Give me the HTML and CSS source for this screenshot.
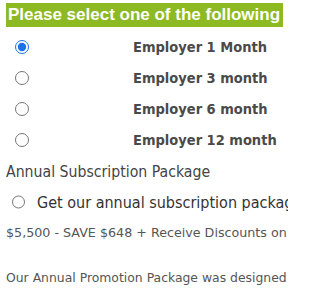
FILE: index.html
```html
<!DOCTYPE html>
<html>
<head>
<meta charset="utf-8">
<link rel="stylesheet" href="styles.css">
</head>
<body>
<div class="page">
  <div class="header">Please select one of the following</div>
  <div class="options">
    <label class="option"><span class="radio-cell"><input type="radio" name="plan" checked></span><span class="opt-label">Employer 1 Month</span></label>
    <label class="option"><span class="radio-cell"><input type="radio" name="plan"></span><span class="opt-label">Employer 3 month</span></label>
    <label class="option"><span class="radio-cell"><input type="radio" name="plan"></span><span class="opt-label">Employer 6 month</span></label>
    <label class="option"><span class="radio-cell"><input type="radio" name="plan"></span><span class="opt-label">Employer 12 month</span></label>
  </div>
  <div class="section-title">Annual Subscription Package</div>
  <label class="annual"><input type="radio" name="plan"><span class="annual-text">Get our annual subscription package</span></label>
  <p class="price">$5,500 - SAVE $648 + Receive Discounts on</p>
  <p class="desc">Our Annual Promotion Package was designed</p>
</div>
</body>
</html>
```
FILE: styles.css
```css
html, body {
  margin: 0;
  padding: 0;
  background: #ffffff;
  overflow: hidden;
}
.page {
  width: 288px;
  overflow: hidden;
  white-space: nowrap;
  font-family: "DejaVu Sans Condensed", "DejaVu Sans", sans-serif;
  color: #444;
}
.header {
  margin: 3px 5px 0 6px;
  height: 24px;
  line-height: 24px;
  padding-left: 2px;
  background: #8dba22;
  color: #fff;
  font-family: "Liberation Sans", Arial, sans-serif;
  font-weight: bold;
  font-size: 17px;
  overflow: hidden;
}
.options {
  margin-top: 4px;
  display: flex;
  flex-direction: column;
}
.option {
  display: flex;
  align-items: center;
  height: 31px;
}
.radio-cell {
  width: 133px;
  display: flex;
  align-items: center;
}
input[type="radio"] {
  width: 14px;
  height: 14px;
  margin: 0 0 0 15px;
  accent-color: #1a73e8;
}
.opt-label {
  font-size: 14.5px;
  font-weight: bold;
  color: #4a4a4a;
}
.section-title {
  margin: 8px 0 0 6px;
  height: 18px;
  line-height: 18px;
  font-size: 15.7px;
  color: #444;
}
.annual {
  display: flex;
  align-items: center;
  height: 24px;
  margin-top: 9px;
}
.annual input[type="radio"] {
  margin-left: 12px;
}
.annual-text {
  margin-left: 12px;
  font-size: 16px;
  color: #333;
}
.price {
  margin: 12px 0 0 6px;
  font-family: "DejaVu Sans", sans-serif;
  font-size: 12.7px;
  line-height: 14px;
  color: #555;
}
.desc {
  margin: 31px 0 0 6px;
  font-family: "DejaVu Sans", sans-serif;
  font-size: 12.4px;
  line-height: 14px;
  color: #555;
}
```
